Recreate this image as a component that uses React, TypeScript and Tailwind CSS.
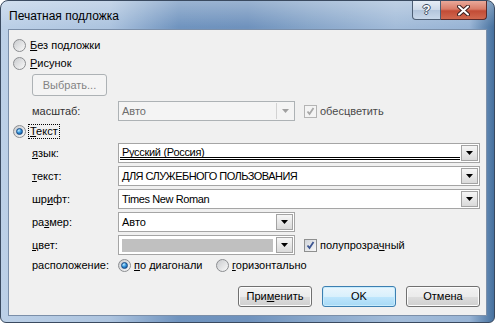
import React from "react";

function Radio({ checked }: { checked?: boolean }) {
  return (
    <span className="flex h-[13px] w-[13px] shrink-0 items-center justify-center rounded-full border border-[#8b8d90] bg-[linear-gradient(135deg,#c9cbce,#f9f9f9)]">
      {checked && (
        <span className="h-[7px] w-[7px] rounded-full border border-[#174a86] bg-[radial-gradient(circle_at_35%_30%,#c4ecff_0%,#3597dd_45%,#0b3f85_100%)]" />
      )}
    </span>
  );
}

function Check({ disabled }: { disabled?: boolean }) {
  return (
    <span
      className={
        disabled
          ? "flex h-[13px] w-[13px] shrink-0 items-center justify-center border border-[#b4b4b4] bg-[#f4f4f4]"
          : "flex h-[13px] w-[13px] shrink-0 items-center justify-center border border-[#8e8f8f] bg-[linear-gradient(135deg,#d0d4da,#f8f8f8)]"
      }
    >
      <svg width="9" height="9" viewBox="0 0 9 9">
        <path
          d="M1.5 4.5L3.5 7L7.5 1"
          fill="none"
          stroke={disabled ? "#a8a8a8" : "#3d5692"}
          strokeWidth="1.8"
        />
      </svg>
    </span>
  );
}

function Arrow({ disabled }: { disabled?: boolean }) {
  return (
    <span
      className={
        disabled
          ? "flex h-full w-[17px] items-center justify-center border-l border-[#d2d2d2] bg-[#f4f4f4]"
          : "flex h-full w-[17px] items-center justify-center border border-[#a3a3a3] bg-[linear-gradient(#f6f6f6,#dadada)]"
      }
    >
      <svg width="7" height="4" viewBox="0 0 7 4">
        <path d="M0 0h7L3.5 4z" fill={disabled ? "#a0a0a0" : "#000"} />
      </svg>
    </span>
  );
}

function Btn({ children, primary }: { children: React.ReactNode; primary?: boolean }) {
  return (
    <div
      className={
        primary
          ? "flex h-[21px] w-[74px] items-center justify-center rounded-[3px] border border-[#3c7fb1] bg-[linear-gradient(#eaf6fd_0%,#d9f0fc_50%,#bee6fd_51%,#a7d9f5_100%)] shadow-[inset_0_0_0_1px_#c8ecfd]"
          : "flex h-[21px] w-[74px] items-center justify-center rounded-[3px] border border-[#707070] bg-[linear-gradient(#f2f2f2_0%,#ebebeb_50%,#dddddd_51%,#cfcfcf_100%)] shadow-[inset_0_0_0_1px_#fcfcfc]"
      }
    >
      {children}
    </div>
  );
}

export default function App() {
  return (
    <div className="flex h-[323px] w-[495px] flex-col rounded-t-[8px] rounded-b-[6px] border border-[#3a4a60] bg-[linear-gradient(180deg,rgba(255,255,255,0.3),rgba(255,255,255,0)_26px),linear-gradient(90deg,#bcd0e7_0%,#adc4df_22%,#7094bf_36%,#6f92bd_50%,#86a5c9_62%,#a3bcd9_80%,#98b4d5_95%,#46719f_100%)] px-[7px] pb-[6px] font-['Liberation_Sans',Arial,sans-serif] text-[11px] text-black">
      {/* title bar */}
      <div className="flex h-[28px] items-start justify-between">
        <div className="pl-[1px] pt-[8px] text-[12px] leading-[14px] text-black">
          Печатная подложка
        </div>
        <div className="flex">
          <div className="flex h-[19px] w-[29px] items-center justify-center rounded-bl-[4px] border border-t-0 border-[#4d5e74] bg-[linear-gradient(#e6edf6_0%,#cdd9e8_50%,#b3c5dc_51%,#c9d8ea_100%)] text-[13px] font-bold text-white [text-shadow:1px_0_#3b4b60,-1px_0_#3b4b60,0_1px_#3b4b60,0_-1px_#3b4b60]">
            ?
          </div>
          <div className="flex h-[19px] w-[46px] items-center justify-center rounded-br-[4px] border border-l-0 border-t-0 border-[#5a2a2a] bg-[linear-gradient(#e9a99a_0%,#d97c68_45%,#c24c36_55%,#d0684f_100%)]">
            <svg width="13" height="11" viewBox="0 0 13 11">
              <path d="M2 1.5L11 9.5M11 1.5L2 9.5" stroke="#3a2020" strokeWidth="4" strokeLinecap="round" />
              <path d="M2 1.5L11 9.5M11 1.5L2 9.5" stroke="#fff" strokeWidth="2" strokeLinecap="round" />
            </svg>
          </div>
        </div>
      </div>

      {/* client */}
      <div className="flex flex-1 flex-col border border-[#7b8fa9] bg-[#f0f0f0] text-[#000]">
        <div className="mt-[7px] flex h-[17px] items-center pl-[4px]">
          <Radio />
          <span className="ml-[4px]">
            <u>Б</u>ез подложки
          </span>
        </div>
        <div className="mt-[1px] flex h-[17px] items-center pl-[4px]">
          <Radio />
          <span className="ml-[4px]">
            <u>Р</u>исунок
          </span>
        </div>
        <div className="mt-[2px] pl-[23px]">
          <div className="flex h-[22px] w-[75px] items-center justify-center rounded-[3px] border border-[#adb2b5] bg-[#f4f4f4] text-[#838383]">
            Выбрать...
          </div>
        </div>
        <div className="mt-[5px] flex h-[20px] items-center pl-[23px]">
          <span className="w-[86px] text-[#333]">масштаб:</span>
          <div className="flex h-[20px] w-[177px] border border-[#adb2b5] bg-[#f4f4f4] p-[1px]">
            <span className="flex-1 pl-[2px] leading-[16px] text-[#6d6d6d]">Авто</span>
            <Arrow disabled />
          </div>
          <span className="ml-[9px] flex items-center">
            <Check disabled />
            <span className="ml-[3px] text-[#4a4a4a]">обесцветить</span>
          </span>
        </div>
        <div className="mt-[2px] flex h-[17px] items-center pl-[4px]">
          <Radio checked />
          <span className="ml-[2px] border border-dotted border-black px-[1px] leading-[13px]">
            <u>Т</u>екст
          </span>
        </div>

        <div className="mt-[3px] flex flex-col gap-[3px] pl-[23px] pr-[6px]">
          <div className="flex h-[20px] items-center">
            <span className="w-[86px]">
              <u>я</u>зык:
            </span>
            <div className="flex h-[20px] flex-1 border border-[#a5a5a5] bg-white p-[1px]">
              <span className="mb-[1px] mr-[1px] flex-1 border-b-[3px] border-double border-black pl-[2px] leading-[14px] tracking-[-0.3px]">
                Русский (Россия)
              </span>
              <Arrow />
            </div>
          </div>
          <div className="flex h-[20px] items-center">
            <span className="w-[86px]">
              <u>т</u>екст:
            </span>
            <div className="flex h-[20px] flex-1 border border-[#a5a5a5] bg-white p-[1px]">
              <span className="flex-1 pl-[2px] leading-[16px] tracking-[-0.55px]">
                ДЛЯ СЛУЖЕБНОГО ПОЛЬЗОВАНИЯ
              </span>
              <Arrow />
            </div>
          </div>
          <div className="flex h-[20px] items-center">
            <span className="w-[86px]">
              шр<u>и</u>фт:
            </span>
            <div className="flex h-[20px] flex-1 border border-[#a5a5a5] bg-white p-[1px]">
              <span className="flex-1 pl-[2px] leading-[16px] tracking-[-0.4px]">Times New Roman</span>
              <Arrow />
            </div>
          </div>
          <div className="flex h-[20px] items-center">
            <span className="w-[86px]">
              ра<u>з</u>мер:
            </span>
            <div className="flex h-[20px] w-[177px] border border-[#a5a5a5] bg-white p-[1px]">
              <span className="flex-1 pl-[2px] leading-[16px]">Авто</span>
              <Arrow />
            </div>
          </div>
          <div className="flex h-[20px] items-center">
            <span className="w-[86px]">
              <u>ц</u>вет:
            </span>
            <div className="flex h-[20px] w-[177px] border border-[#a5a5a5] bg-white p-[1px]">
              <span className="flex flex-1 items-center pl-[2px] pr-[3px]">
                <span className="h-[13px] flex-1 bg-[#c0c0c0]" />
              </span>
              <Arrow />
            </div>
            <span className="ml-[9px] flex items-center">
              <Check />
              <span className="ml-[3px]">
                полупрозра<u>ч</u>ный
              </span>
            </span>
          </div>
        </div>

        <div className="mt-[2px] flex h-[17px] items-center pl-[23px]">
          <span className="w-[86px]">расположение:</span>
          <span className="flex w-[98px] items-center">
            <Radio checked />
            <span className="ml-[3px]">
              <u>п</u>о диагонали
            </span>
          </span>
          <span className="flex items-center">
            <Radio />
            <span className="ml-[3px]">
              <u>г</u>оризонтально
            </span>
          </span>
        </div>

        <div className="mt-[12px] flex justify-end gap-[10px] pr-[6px]">
          <Btn>
            При<u>м</u>енить
          </Btn>
          <Btn primary>OK</Btn>
          <Btn>Отмена</Btn>
        </div>
      </div>
    </div>
  );
}
